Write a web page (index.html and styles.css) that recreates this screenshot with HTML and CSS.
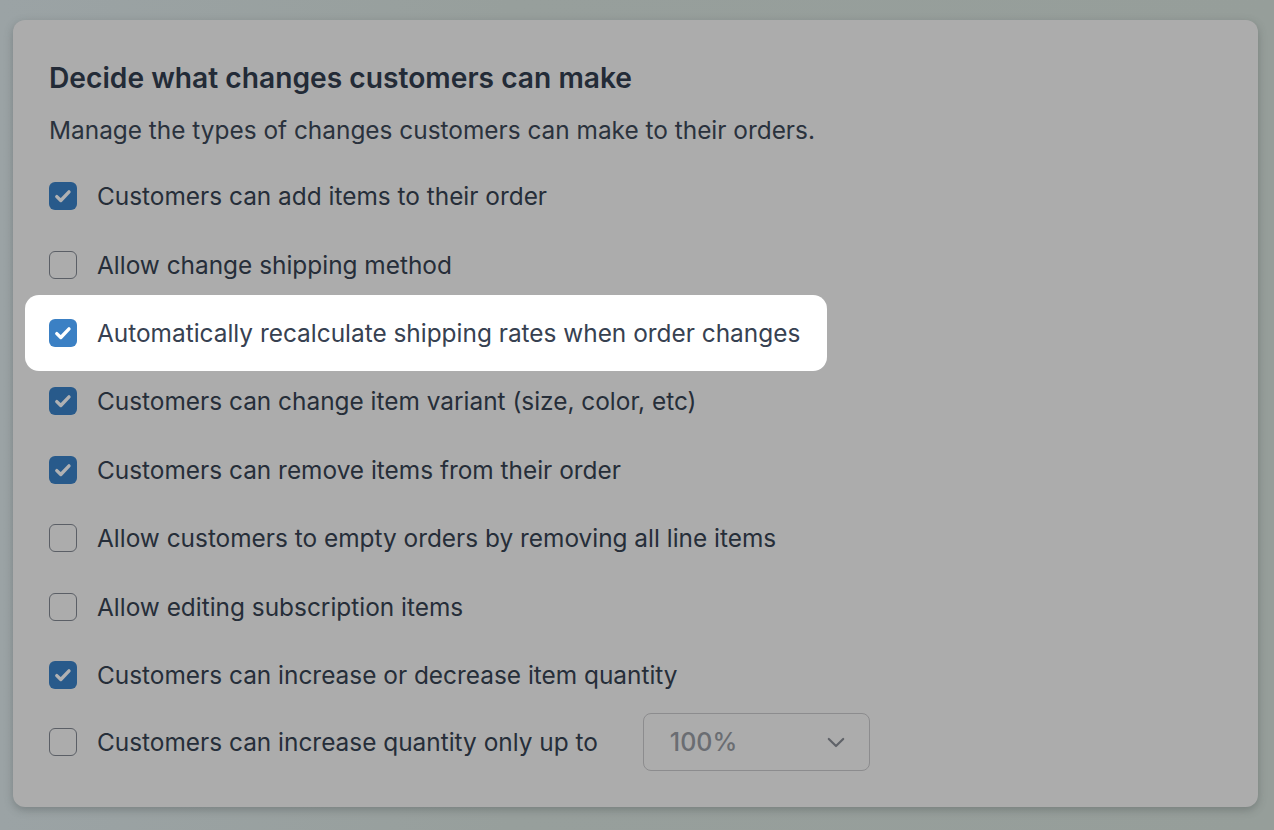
FILE: index.html
```html
<!DOCTYPE html>
<html>
<head>
<meta charset="utf-8">
<link rel="stylesheet" href="styles.css">
</head>
<body>
<div class="card">
  <h1 class="title">Decide what changes customers can make</h1>
  <p class="sub">Manage the types of changes customers can make to their orders.</p>
  <ul class="list">
    <li class="row"><span class="cb on"><svg viewBox="0 0 28 28"><path d="M7.8 14.6l4 3.9 8.2-8.6"/></svg></span><span class="lbl">Customers can add items to their order</span></li>
    <li class="row"><span class="cb"></span><span class="lbl">Allow change shipping method</span></li>
    <li class="row hl"><span class="cb on"><svg viewBox="0 0 28 28"><path d="M7.8 14.6l4 3.9 8.2-8.6"/></svg></span><span class="lbl">Automatically recalculate shipping rates when order changes</span></li>
    <li class="row"><span class="cb on"><svg viewBox="0 0 28 28"><path d="M7.8 14.6l4 3.9 8.2-8.6"/></svg></span><span class="lbl">Customers can change item variant (size, color, etc)</span></li>
    <li class="row"><span class="cb on"><svg viewBox="0 0 28 28"><path d="M7.8 14.6l4 3.9 8.2-8.6"/></svg></span><span class="lbl">Customers can remove items from their order</span></li>
    <li class="row"><span class="cb"></span><span class="lbl">Allow customers to empty orders by removing all line items</span></li>
    <li class="row"><span class="cb"></span><span class="lbl">Allow editing subscription items</span></li>
    <li class="row"><span class="cb on"><svg viewBox="0 0 28 28"><path d="M7.8 14.6l4 3.9 8.2-8.6"/></svg></span><span class="lbl">Customers can increase or decrease item quantity</span></li>
    <li class="row last"><span class="cb"></span><span class="lbl">Customers can increase quantity only up to</span>
      <div class="select"><span class="val">100%</span><svg class="chev" viewBox="0 0 20 12"><path d="M2 2l8 8 8-8"/></svg></div>
    </li>
  </ul>
</div>
</body>
</html>
```
FILE: styles.css
```css
html, body { margin: 0; padding: 0; }
body {
  width: 1274px;
  height: 830px;
  overflow: hidden;
  background: linear-gradient(90deg, #9ba3a5 0%, #979f9c 40%, #969e9a 100%);
  font-family: Inter, "Noto Sans", sans-serif;
  padding: 20px 16px 0 13px;
  box-sizing: border-box;
}
.card {
  width: 1245px;
  height: 787px;
  box-sizing: border-box;
  background: #acacac;
  border-radius: 12px;
  box-shadow: 0 3px 8px rgba(60, 70, 68, 0.35);
  padding: 42px 36px 0 36px;
}
.title {
  margin: 0;
  font-size: 28.2px;
  line-height: 32px;
  font-weight: 600;
  color: #232b37;
  letter-spacing: 0;
}
.sub {
  margin: 22px 0 0 0;
  font-size: 24.4px;
  line-height: 28px;
  color: #2a323d;
}
.list {
  list-style: none;
  margin: 18px 0 0 0;
  padding: 0;
}
.row {
  display: flex;
  align-items: center;
  height: 68.4px;
  font-size: 24.4px;
  color: #262e39;
}
.row.hl {
  width: fit-content;
  background: #ffffff;
  border-radius: 14px;
  height: 76px;
  margin: -3.8px 0 -3.8px -24px;
  padding: 0 27px 0 24px;
  color: #374151;
}
.cb {
  flex: none;
  width: 28px;
  height: 28px;
  box-sizing: border-box;
  border: 1.5px solid #5b5f66;
  border-radius: 6px;
  margin-right: 20px;
  display: flex;
}
.cb.on {
  background: #285a8b;
  border: none;
}
.cb svg { width: 100%; height: 100%; }
.cb path {
  fill: none;
  stroke: #b0b1b3;
  stroke-width: 3.4;
  stroke-linecap: round;
  stroke-linejoin: round;
}
.hl .cb.on { background: #3b80c4; }
.hl .cb path { stroke: #ffffff; }
.row.last { height: 66px; }
.select {
  margin-left: 45px;
  width: 227px;
  height: 58px;
  box-sizing: border-box;
  border: 1px solid #8c8c8e;
  border-radius: 8px;
  display: flex;
  align-items: center;
  justify-content: space-between;
  padding: 0 24px 0 26px;
}
.val { color: #6a6d72; font-size: 25px; font-weight: 500; }
.chev { width: 18px; height: 11px; }
.chev path { fill: none; stroke: #5f6268; stroke-width: 2.4; stroke-linecap: round; stroke-linejoin: round; }
```
